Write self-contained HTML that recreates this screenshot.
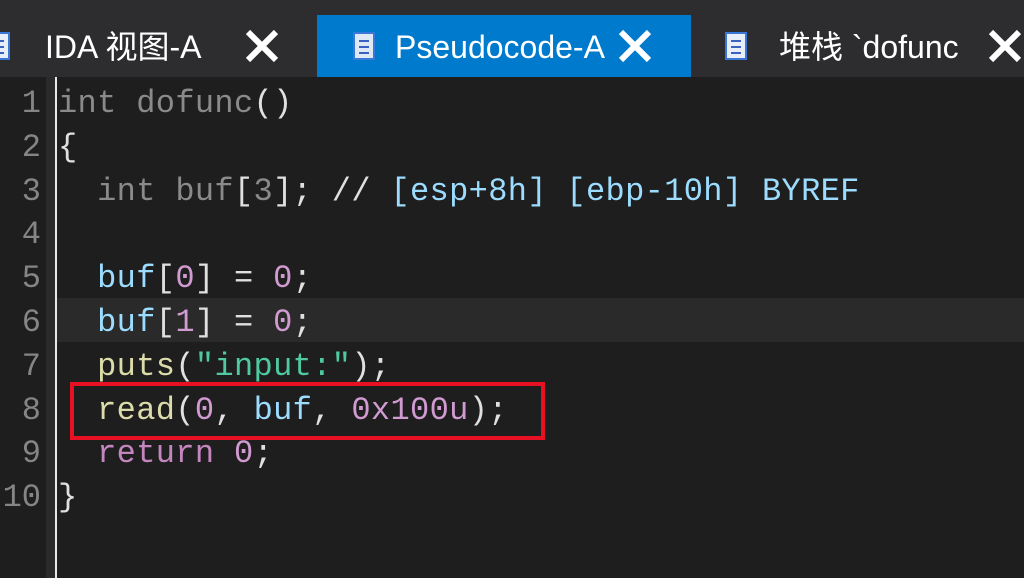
<!DOCTYPE html>
<html><head><meta charset="utf-8"><style>
body{margin:0;width:1024px;height:578px;background:#1e1e1e;overflow:hidden;position:relative;font-family:"Liberation Sans","Noto Sans CJK SC",sans-serif}
.bar{position:absolute;left:0;top:0;width:1024px;height:77px;background:#2d2d30}
.tab{position:absolute;top:15px;height:62px;color:#fff;font-size:32px;line-height:64px;white-space:nowrap}
.x{position:absolute;top:14px}
.ic{position:absolute;top:17px;width:22px;height:28px;background:#e8eef8;border:2px solid #3a78d8;box-sizing:border-box}
.ic i{position:absolute;left:4px;right:4px;height:2px;background:#3a60c0}
.gut{position:absolute;left:46px;top:77px;width:9px;height:501px;background:#2a2a2a}
.vl{position:absolute;left:55px;top:77px;width:2px;height:501px;background:#e8e8e8}
.hl{position:absolute;left:57px;top:298px;width:967px;height:44px;background:#2a2a2a}
.code{position:absolute;top:82px;left:0;font-family:"Liberation Mono",monospace;font-size:32px;letter-spacing:0.35px;line-height:43.8px;white-space:pre}
.ln{position:absolute;left:0;width:41px;text-align:right;color:#858585;font-family:"Liberation Mono",monospace;font-size:32px;line-height:43.8px;top:82px;white-space:pre}
.src{position:absolute;left:58px}
.g{color:#8a8a8a}.w{color:#e0e0e0}.b{color:#9cdcfe}.n{color:#d19bd1}.y{color:#dcdcaa}.s{color:#4ec9a0}.r{color:#c586c0}
.box{position:absolute;left:70px;top:382px;width:475px;height:58px;border:4px solid #e81123;box-sizing:border-box}
</style></head><body>
<div class="bar"></div>
<div class="tab" style="left:0;width:300px"><div class="ic" style="left:-12px"><i style="top:6px"></i><i style="top:12px"></i><i style="top:18px"></i></div><span style="position:absolute;left:45px">IDA 视图-A</span><svg class="x" style="left:245px" width="34" height="34"><path d="M3 3L31 31M31 3L3 31" stroke="#fff" stroke-width="6"/></svg></div>
<div class="tab" style="left:317px;width:374px;background:#007acc"><div class="ic" style="left:36px;background:#dfe8f5"><i style="top:6px"></i><i style="top:12px"></i><i style="top:18px"></i></div><span style="position:absolute;left:78px">Pseudocode-A</span><svg class="x" style="left:301px" width="34" height="34"><path d="M3 3L31 31M31 3L3 31" stroke="#fff" stroke-width="6"/></svg></div>
<div class="tab" style="left:691px;width:333px"><div class="ic" style="left:34px"><i style="top:6px"></i><i style="top:12px"></i><i style="top:18px"></i></div><span style="position:absolute;left:88px">堆栈 `dofunc</span><svg class="x" style="left:297px" width="34" height="34"><path d="M3 3L31 31M31 3L3 31" stroke="#fff" stroke-width="6"/></svg></div>
<div class="gut"></div><div class="hl"></div><div class="vl"></div>
<div class="ln">1
2
3
4
5
6
7
8
9
10</div>
<div class="code src"><span class="g">int dofunc</span><span class="w">()</span>
<span class="w">{</span>
  <span class="g">int buf</span><span class="w">[</span><span class="g">3</span><span class="w">];</span> <span class="w">//</span> <span class="b">[esp+8h] [ebp-10h] BYREF</span>

  <span class="b">buf</span><span class="w">[</span><span class="n">0</span><span class="w">]</span> <span class="w">=</span> <span class="n">0</span><span class="w">;</span>
  <span class="b">buf</span><span class="w">[</span><span class="n">1</span><span class="w">]</span> <span class="w">=</span> <span class="n">0</span><span class="w">;</span>
  <span class="y">puts</span><span class="w">(</span><span class="s">"input:"</span><span class="w">);</span>
  <span class="y">read</span><span class="w">(</span><span class="n">0</span><span class="w">,</span> <span class="b">buf</span><span class="w">,</span> <span class="n">0x100u</span><span class="w">);</span>
  <span class="r">return</span> <span class="n">0</span><span class="w">;</span>
<span class="w">}</span></div>
<div class="box"></div>
</body></html>
